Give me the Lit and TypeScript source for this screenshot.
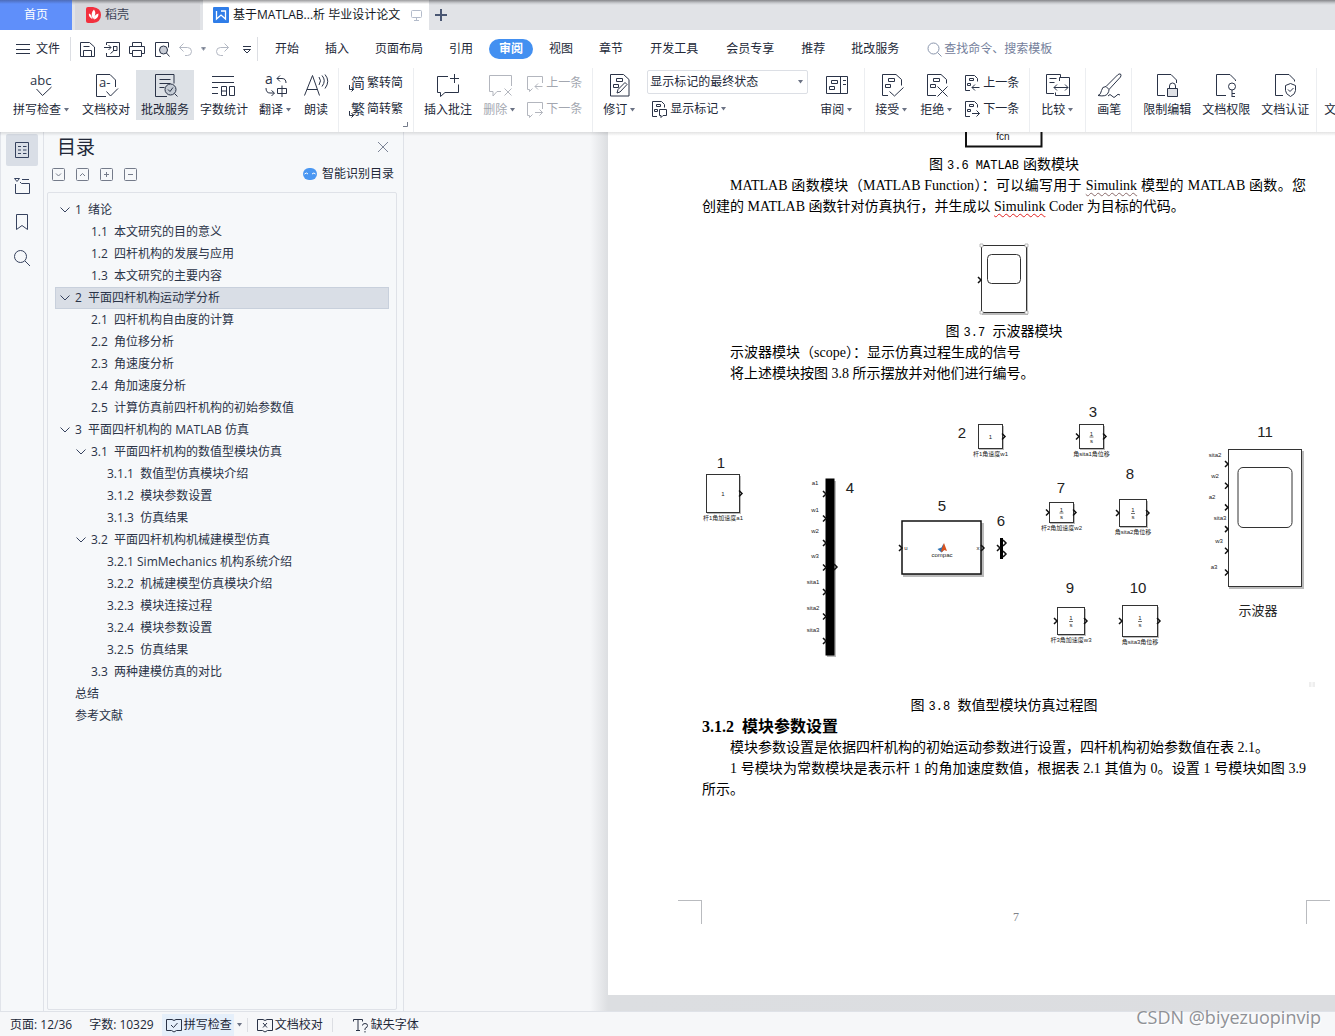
import { LitElement, html, svg, css, nothing } from "lit";
import { customElement } from "lit/decorators.js";
import { classMap } from "lit/directives/class-map.js";

const SANS = css`"Open Sans", "Noto Sans CJK SC", sans-serif`;

/* ---------- icons ---------- */

const caret = html`<svg class="caret" width="5" height="4" viewBox="0 0 5 4"><path d="M0 0h5L2.5 3.5z" fill="#6b7284"/></svg>`;

const big: Record<string, unknown> = {
  spell: svg`<text x="2" y="13" font-size="13">abc</text><path d="M8.5 17l6 6.500 9-8.500"/>`,
  proof: svg`<path d="M14 24.500H4.500v-22H18l5.500 5.500v7"/><text x="7" y="15" font-size="13">a-</text><path d="M14.500 19.500l4 4.500 7.500-7.500"/>`,
  review: svg`<path d="M16 24.500H4.500v-22h18.500v9M8.500 7.500h11M8.500 11.500h11M8.500 15.500h5"/><circle cx="19.500" cy="17.500" r="5.500" fill="#c4cbd4"/><path d="M23.500 21.500l3 3M17 17.500l2 2 3-4"/>`,
  count: svg`<path d="M2 4.500h22M2 10.500h22M2 15.500h6M2 21.500h6M11.500 14.500h5v9h-5zM11.500 19h5M19.500 14.500h5v9h-5z"/>`,
  translate: svg`<text x="3" y="12" font-size="14">a</text><path d="M18 3.500l-3 3 3 3M15 6.500h5q4 0 4 4.500M4 16q0 5 4 5h4M9.500 18.500l3 2.500-3 3M15.500 16.500h9v5h-9zM20 13.500v11.500"/>`,
  read: svg`<path d="M2.500 23.500L10.500 3.500l7 20M5 17.500h10.500M17 5q3 3.500 0 8M20 3.500q4.500 5 0 11M23 2.500q5.500 6.500 0 14"/>`,
  comment: svg`<path d="M14 4.500H3.500v16h3v4l4.500-4h13.500v-8M20.500 2v9M16 6.500h9"/>`,
  remove: svg`<path d="M25.500 14V3.500h-22v16h3.500v4.500l4-4.500h4M18.500 16.500l7 7M25.500 16.500l-7 7"/>`,
  revise: svg`<path d="M4.500 2.500h13l5.500 5v16.500H4.500zM10.500 6.500h6v3h-6zM7.500 12.500h5v3h-5zM11 21l1-3.500 7-7 2 2-7 7.500z"/>`,
  pane: svg`<path d="M3.500 4.500h21v17h-21zM17.500 4.500v17M8.500 8.500h6v3h-6zM6.500 14.500h5v3h-5zM20 8.500h3M20 12.500h3"/>`,
  accept: svg`<path d="M10 23.500H4.500v-21H18l5.500 5v6M10.500 6.500h6v3h-6zM7.500 12.500h5v3h-5zM11.500 19.500l5 4.500 9-8.500"/>`,
  reject: svg`<path d="M13 23.500H4.500v-21H18l5.500 5v4M10.500 6.500h6v3h-6zM7.500 12.500h5v3h-5zM14.500 14.500l10 10M24.500 14.500l-10 10"/>`,
  compare: svg`<path d="M10 21.500H2.500v-19h14v3M5.500 6.500h7M5.500 10.500h5M15.500 9V5.500h10v18h-14v-3M10 15.500h14M13 12.500l-3 3 3 3M21 12.500l3 3-3 3"/>`,
  pen: svg`<path d="M25.500 2q-1.500-.500-3 1L11 14.500l3 3L25.500 5q1-2 0-3zM11 14.500q-4 0-4.500 4T3 23.500q8.500 1.500 10-2.500 1-1.500 1-3.500M13 24q2-3 4 0t4 0 4-1"/>`,
  lock: svg`<path d="M12 23.500H4.500v-21H18l5.500 5.500v3"/><path d="M14.500 16.500h10v8h-10z" fill="#dfe1e6"/><path d="M16.500 16.500v-2.500q0-3 3-3t3 3v2.500"/>`,
  key: svg`<path d="M14 23.500H4.500v-21H18l5.500 5.500v1"/><circle cx="20" cy="14.500" r="3.500"/><path d="M20 18v7M20 21.500h3M20 24.500h3"/>`,
  shield: svg`<path d="M12 23.500H4.500v-21H18l5.500 5.500v1.500M19.500 11.500l5 2v5q0 3.500-5 6-5-2.500-5-6v-5zM17 17.500l2 2 3.500-3.500"/>`,
};

const small: Record<string, unknown> = {
  toSimple: svg`<text x="3" y="13" font-size="14">简</text><path d="M1.500 10v4.500h4M3.500 12l2 2.500-2 2"/>`,
  toTrad: svg`<text x="3" y="13" font-size="14">繁</text><path d="M1.500 10v4.500h4M3.500 12l2 2.500-2 2"/>`,
  prevNote: svg`<path d="M15.500 8V1.500H.5v13h2v2l3-3M15.500 11.500H8M11 8.500l-3 3 3 3"/>`,
  nextNote: svg`<path d="M15.500 8V1.500H.5v13h2v2l3-3M8 11.500h7.500M12.500 8.500l3 3-3 3"/>`,
  marks: svg`<path d="M6 15.500H1.500V.500h9l3 3v3M5.500 3.500h4v2h-4zM3.500 8.500h3v2h-3zM8.500 8.500h7v6H12l-2 2v-2H8.500z"/>`,
  prevRev: svg`<path d="M6 15.500H1.500V.500h9l3 3v3M5.500 3.500h4v2h-4zM3.500 8.500h3v2h-3zM15.500 12.500H8M11 9.500l-3 3 3 3"/>`,
  nextRev: svg`<path d="M6 15.500H1.500V.500h9l3 3v3M5.500 3.500h4v2h-4zM3.500 8.500h3v2h-3zM8 12.500h7.500M12.500 9.500l3 3-3 3"/>`,
};

const quick: [string, unknown][] = [
  ["保存", svg`<path d="M1.500 15.500v-14H10.500l5 4.500v9.500zM4.500 15v-5.500h8V15M4.500 5.500h6"/>`],
  ["输出为PDF", svg`<path d="M2.500 4V1.500h13v14h-13V12M0 6.500h7M4.500 4l2.500 2.500L4.500 9M9.500 5.500h3.500v4H9.500zM9.500 5v5l-3 2.500"/>`],
  ["打印", svg`<path d="M3.500 5V1.500h9V5M3.500 12.500h-3v-7h15v7h-3M3.500 9.500h9v6h-9z"/>`],
  ["打印预览", svg`<path d="M7 15.500H1.500v-14h13v5"/><circle cx="9.500" cy="9" r="4" fill="#c9cdd6"/><path d="M12.500 12l3 3.500"/>`],
];

const rail: [string, unknown][] = [
  ["目录", svg`<path d="M2.500 1.500h13v15h-13zM5 5.500h3M10 5.500h3.500M5 9h3M10 9h3.500M5 12.500h3M10 12.500h3.500"/>`],
  ["章节", svg`<path d="M1.500 1.500h5L4 4.500zM9 2.500h7M2.500 7v9.500h14v-10H8.500L7 5"/>`],
  ["书签", svg`<path d="M3.500 1.500h11v15L9 12.500l-5.500 4z"/>`],
  ["查找", svg`<circle cx="7.500" cy="7.500" r="6"/><path d="M12 12l5 5"/>`],
];

/* ---------- data ---------- */

type Cmd = { icon: string; label: string; drop?: boolean; on?: boolean; off?: boolean };
type Pair = { pair: Cmd[]; corner?: boolean };
type Group = (Cmd | Pair | "display")[];

const groups: Group[] = [
  [
    { icon: "spell", label: "拼写检查", drop: true },
    { icon: "proof", label: "文档校对" },
    { icon: "review", label: "批改服务", on: true },
    { icon: "count", label: "字数统计" },
    { icon: "translate", label: "翻译", drop: true },
    { icon: "read", label: "朗读" },
  ],
  [{ pair: [{ icon: "toSimple", label: "繁转简" }, { icon: "toTrad", label: "简转繁" }], corner: true }],
  [
    { icon: "comment", label: "插入批注" },
    { icon: "remove", label: "删除", drop: true, off: true },
    { pair: [{ icon: "prevNote", label: "上一条", off: true }, { icon: "nextNote", label: "下一条", off: true }] },
  ],
  [{ icon: "revise", label: "修订", drop: true }, "display", { icon: "pane", label: "审阅", drop: true }],
  [
    { icon: "accept", label: "接受", drop: true },
    { icon: "reject", label: "拒绝", drop: true },
    { pair: [{ icon: "prevRev", label: "上一条" }, { icon: "nextRev", label: "下一条" }] },
  ],
  [{ icon: "compare", label: "比较", drop: true }],
  [{ icon: "pen", label: "画笔" }],
  [
    { icon: "lock", label: "限制编辑" },
    { icon: "key", label: "文档权限" },
    { icon: "shield", label: "文档认证" },
  ],
  [{ icon: "lock", label: "文档加密" }],
];

const menus = ["开始", "插入", "页面布局", "引用", "审阅", "视图", "章节", "开发工具", "会员专享", "推荐", "批改服务"];

type Node = { n: string; t: string; lv: number; open?: boolean; sel?: boolean };
const outline: Node[] = [
  { n: "1", t: "绪论", lv: 1, open: true },
  { n: "1.1", t: "本文研究的目的意义", lv: 2 },
  { n: "1.2", t: "四杆机构的发展与应用", lv: 2 },
  { n: "1.3", t: "本文研究的主要内容", lv: 2 },
  { n: "2", t: "平面四杆机构运动学分析", lv: 1, open: true, sel: true },
  { n: "2.1", t: "四杆机构自由度的计算", lv: 2 },
  { n: "2.2", t: "角位移分析", lv: 2 },
  { n: "2.3", t: "角速度分析", lv: 2 },
  { n: "2.4", t: "角加速度分析", lv: 2 },
  { n: "2.5", t: "计算仿真前四杆机构的初始参数值", lv: 2 },
  { n: "3", t: "平面四杆机构的 MATLAB 仿真", lv: 1, open: true },
  { n: "3.1", t: "平面四杆机构的数值型模块仿真", lv: 2, open: true },
  { n: "3.1.1", t: "数值型仿真模块介绍", lv: 3 },
  { n: "3.1.2", t: "模块参数设置", lv: 3 },
  { n: "3.1.3", t: "仿真结果", lv: 3 },
  { n: "3.2", t: "平面四杆机构机械建模型仿真", lv: 2, open: true },
  { n: "3.2.1", t: "SimMechanics 机构系统介绍", lv: 3 },
  { n: "3.2.2", t: "机械建模型仿真模块介绍", lv: 3 },
  { n: "3.2.3", t: "模块连接过程", lv: 3 },
  { n: "3.2.4", t: "模块参数设置", lv: 3 },
  { n: "3.2.5", t: "仿真结果", lv: 3 },
  { n: "3.3", t: "两种建模仿真的对比", lv: 2 },
  { n: "", t: "总结", lv: 1 },
  { n: "", t: "参考文献", lv: 1 },
];

/* ---------- top area ---------- */

@customElement("title-tabs")
class TitleTabs extends LitElement {
  static styles = css`
    :host { display: block; }
    .bar { display: flex; height: 30px; background: linear-gradient(#85868a, #c9cbcf 3px, #e1e3e7 5px); font: 12px/30px ${SANS}; color: #3c4356; }
    button { display: flex; align-items: center; border: 0; padding: 0; background: none; font: inherit; color: inherit; white-space: nowrap; }
    .home { width: 72px; justify-content: center; background: linear-gradient(#4d6cb8, #5f8ffa 4px); color: #fff; margin-right: 3px; }
    .shop { width: 125px; padding-left: 11px; gap: 4px; background: linear-gradient(#85868a, #d7d8dc 4px); margin-right: 3px; }
    .doc { width: 226px; padding-left: 10px; gap: 4px; background: linear-gradient(#9c9c9e, #fff 4px); color: #131722; }
    .doc .screen { margin-left: 7px; }
    .add { padding: 0 6px; }
  `;
  render() {
    return html`<div class="bar" role="tablist">
      <button class="home" role="tab">首页</button>
      <button class="shop" role="tab"><svg width="15" height="16" viewBox="0 0 15 16"><path d="M0 2q0-2 2-2h5q8 1 8 8t-8 8H2q-2 0-2-2z" fill="#f2303e"/><path d="M6 12Q2 9 3 6.500q3 1 3 5.500M7 12.500Q4 6 8 2.500q3 4-1 10M8 12.500q0-5 4.500-6 0 5-4.500 6" fill="#fff"/></svg>稻壳</button>
      <button class="doc" role="tab" aria-selected="true"><svg width="16" height="16" viewBox="0 0 16 16"><rect width="16" height="16" rx="1" fill="#2f7de8"/><path d="M3.500 4v8L8 8l4.500 4V4H8" fill="none" stroke="#fff" stroke-width="1.300"/></svg>基于MATLAB...析 毕业设计论文<svg class="screen" width="12" height="12" viewBox="0 0 12 12" fill="none" stroke="#b4bccb"><rect x=".5" y="1.500" width="10" height="7" rx="1"/><path d="M5.500 8.500v3M3 11.500h5"/></svg></button>
      <button class="add" aria-label="新建"><svg width="12" height="12" viewBox="0 0 12 12" stroke="#4a5773" stroke-width="2"><path d="M6 0v12M0 6h12"/></svg></button>
    </div>`;
  }
}

@customElement("menu-row")
class MenuRow extends LitElement {
  static styles = css`
    :host { display: block; }
    .row { display: flex; align-items: center; height: 38px; padding-left: 16px; background: #fff; font: 12px/20px ${SANS}; color: #222838; }
    button { display: flex; align-items: center; border: 0; background: none; padding: 0; font: inherit; color: inherit; white-space: nowrap; }
    svg { flex: none; fill: none; stroke: #2a3347; }
    .file { gap: 6px; }
    .sep { width: 1px; height: 24px; background: #dcdee3; }
    .quick { display: flex; align-items: center; gap: 9px; padding: 0 1px 0 8px; margin-left: 10px; margin-right: 4px; border: solid #dcdee3; border-width: 0 1px; height: 24px; }
    .quick .faint svg { stroke: #b3b8c3; }
    .quick .caret { fill: #6b7284; stroke: none; }
    .history { gap: 8px; }
    .tabs { display: flex; }
    .tabs button { padding: 0 13px; }
    .tabs .on { padding: 0 10px; margin: 0 3px; background: #4390f1; color: #fff; border-radius: 10px; font-weight: 700; }
    .tabs .wide { padding: 0 14px; }
    label { display: flex; align-items: center; gap: 2px; margin-left: 15px; flex: 1; }
    label svg { stroke: #8a96ad; }
    input { border: 0; outline: 0; padding: 0; width: 100%; font: inherit; background: none; }
    input::placeholder { color: #74809b; opacity: 1; }
  `;
  render() {
    return html`<div class="row">
      <button class="file"><svg width="14" height="12" viewBox="0 0 14 12"><path d="M0 1.500h14M0 6.500h14M0 10.500h14"/></svg>文件</button>
      <div class="quick">
        ${quick.map(([name, art]) => html`<button aria-label=${name}><svg width="16" height="17" viewBox="0 0 16 17">${art}</svg></button>`)}
        <button class="faint history" aria-label="撤销"><svg width="14" height="13" viewBox="0 0 14 13"><path d="M4.500.500l-4 4 4 4M.500 4.500h8q4 0 4 4t-4 4H6"/></svg>${caret}</button>
        <button class="faint" aria-label="恢复"><svg width="14" height="13" viewBox="0 0 14 13"><path d="M9.500.500l4 4-4 4M13.500 4.500h-8q-4 0-4 4t4 4H8"/></svg></button>
        <button aria-label="自定义快速访问工具栏"><svg width="18" height="9" viewBox="0 0 18 9"><path d="M5 1.500h8M5.500 4.500L9 8l3.500-3.500z"/></svg></button>
      </div>
      <nav class="tabs">
        ${menus.map((m) => html`<button class=${classMap({ on: m === "审阅", wide: m === "开发工具" || m === "会员专享" })}>${m}</button>`)}
      </nav>
      <label><svg width="15" height="15" viewBox="0 0 15 15"><circle cx="6.500" cy="6.500" r="5.500"/><path d="M10.500 10.500l4 4"/></svg><input type="search" aria-label="查找命令" placeholder="查找命令、搜索模板" /></label>
    </div>`;
  }
}

@customElement("ribbon-bar")
class RibbonBar extends LitElement {
  static styles = css`
    :host { display: block; position: relative; z-index: 2; }
    .bar { display: flex; height: 64px; padding-left: 8px; overflow: hidden; background: #fff; font: 12px/16px ${SANS}; color: #222838; }
    .shade { height: 4px; margin-bottom: -4px; background: linear-gradient(#0000001c, #0000); }
    .group { display: flex; flex: none; gap: 1px; padding-right: 5px; }
    .group + .group { padding-left: 5px; border-left: 1px solid #eceef1; }
    .group:nth-child(n + 6) { padding-left: 6px; }
    .group:nth-child(8) { padding-right: 2px; }
    .group:last-child { padding-left: 2px; }
    button { border: 0; background: none; padding: 0; font: inherit; color: inherit; white-space: nowrap; }
    svg { flex: none; fill: none; stroke: #2a3347; overflow: visible; }
    svg text { fill: #2a3347; stroke: none; font-family: "Open Sans", "Noto Sans CJK SC", sans-serif; }
    .caret { fill: #6b7284; stroke: none; margin: 0 2px 0 3px; }
    .tall { display: flex; flex-direction: column; align-items: center; gap: 4px; height: 50px; margin-top: 2px; padding: 2px 5px; }
    .tall > svg { margin: 0 -2px; }
    .tall span, .line { display: flex; align-items: center; }
    .on { background: #dde1e6; }
    .off { color: #a3a7b0; }
    .off svg { stroke: #b3b6be; }
    .off .caret { fill: #a3a7b0; stroke: none; }
    .pair { position: relative; display: flex; flex-direction: column; gap: 8px; padding: 6px 5px 0 4px; }
    .line { gap: 2px; height: 18px; }
    .corner { position: absolute; right: -1px; bottom: 4px; stroke: #747b8a; }
    .display { display: flex; flex-direction: column; gap: 6px; margin: 2px 6px 0 4px; }
    .pick { position: relative; display: flex; align-items: center; }
    .pick .caret { position: absolute; right: 3px; pointer-events: none; }
    select { appearance: none; width: 161px; height: 24px; padding: 0 2px; border: 1px solid #dcdfe5; border-radius: 2px; background: #fff; font: inherit; color: inherit; }
    .display .line { margin-left: 4px; }
    .display .line .caret { margin-left: 1px; }
  `;
  private tall(c: Cmd) {
    return html`<button class=${classMap({ tall: true, on: !!c.on, off: !!c.off })} ?disabled=${c.off}>
      <svg width="28" height="26" viewBox="0 0 28 26">${big[c.icon]}</svg><span>${c.label}${c.drop ? caret : nothing}</span>
    </button>`;
  }
  private line(c: Cmd) {
    return html`<button class=${classMap({ line: true, off: !!c.off })} ?disabled=${c.off}>
      <svg width="17" height="17" viewBox="0 0 17 17">${small[c.icon]}</svg>${c.label}${c.drop ? caret : nothing}
    </button>`;
  }
  private item(it: Cmd | Pair | "display") {
    if (it === "display")
      return html`<div class="display">
        <div class="pick"><select aria-label="标记显示方式"><option>显示标记的最终状态</option></select>${caret}</div>
        ${this.line({ icon: "marks", label: "显示标记", drop: true })}
      </div>`;
    if ("pair" in it)
      return html`<div class="pair">${it.pair.map((c) => this.line(c))}
        ${it.corner ? html`<svg class="corner" width="6" height="6" viewBox="0 0 6 6"><path d="M4.500 0v4.500H0"/></svg>` : nothing}</div>`;
    return this.tall(it);
  }
  render() {
    return html`<div class="bar">${groups.map((g) => html`<div class="group">${g.map((i) => this.item(i))}</div>`)}</div><div class="shade"></div>`;
  }
}

/* ---------- outline ---------- */

@customElement("outline-pane")
class OutlinePane extends LitElement {
  static styles = css`
    :host { display: flex; flex: none; background: #f6f8fa; color: #2a3347; font: 12px/22px ${SANS}; border-left: 1px solid #e1e4ea; }
    button { border: 0; background: none; padding: 0; display: flex; align-items: center; justify-content: center; font: inherit; color: inherit; }
    svg { fill: none; stroke: #36425e; flex: none; }
    .rail { display: flex; flex-direction: column; gap: 4px; padding: 2px 5px; border-right: 1px solid #dfe2e8; }
    .rail button { width: 32px; height: 32px; border-radius: 2px; }
    .rail .on { background: #d9dee6; }
    .pane { display: flex; flex-direction: column; width: 360px; border-right: 1px solid #dfe2e8; box-sizing: border-box; }
    .head { display: flex; justify-content: space-between; align-items: center; height: 30px; padding: 0 14px 0 13px; }
    h2 { margin: 0; font-size: 19px; line-height: 28px; font-weight: 400; color: #222838; }
    .head svg { stroke: #7c8496; }
    .tools { display: flex; align-items: center; gap: 11px; height: 24px; padding: 0 9px 0 8px; }
    .tools svg { stroke: #747b8a; }
    .smart { margin-left: auto; gap: 5px; color: #222838; }
    .smart svg { stroke: #fff; }
    .tree { flex: 1; list-style: none; margin: 6px 6px 1px 3px; padding: 6px 7px; border: 1px solid #dfe2e8; border-radius: 2px; }
    .node { display: flex; align-items: center; height: 22px; border: 1px solid transparent; box-sizing: border-box; white-space: pre; }
    .node svg { width: 10px; margin: 0 5px 0 4px; }
    .sel { background: #d9dee6; border-color: #c8d0dc; }
    .lv2 { padding-left: 16px; }
    .lv3 { padding-left: 32px; }
  `;
  render() {
    return html`
      <nav class="rail">${rail.map(([name, art], i) => html`<button aria-label=${name} class=${i ? "" : "on"}><svg width="18" height="18" viewBox="0 0 18 18">${art}</svg></button>`)}</nav>
      <section class="pane">
        <div class="head"><h2>目录</h2><button aria-label="关闭"><svg width="12" height="12" viewBox="0 0 12 12"><path d="M1 1l10 10M11 1L1 11"/></svg></button></div>
        <div class="tools">
          ${[["展开", "M4 5.500l2.500 2.500L9 5.500"], ["收起", "M4 8l2.500-2.500L9 8"], ["增加层级", "M6.500 4v5M4 6.500h5"], ["减少层级", "M4 6.500h5"]].map(
            ([n, d]) => html`<button aria-label=${n}><svg width="13" height="13" viewBox="0 0 13 13"><rect x=".5" y=".5" width="12" height="12" rx="1"/><path d=${d}/></svg></button>`
          )}
          <button class="smart"><svg width="14" height="12" viewBox="0 0 14 12"><rect width="14" height="12" rx="6" fill="#4a97f2" stroke="none"/><path d="M1.500 6q2-2 3.500 0M9 6q2-2 3.500 0"/></svg>智能识别目录</button>
        </div>
        <ul class="tree">
          ${outline.map((o) => html`<li class="node lv${o.lv} ${o.sel ? "sel" : ""}"><svg width="10" height="6" viewBox="0 0 10 6">${o.open ? svg`<path d="M.5.500L5 5 9.500.500"/>` : nothing}</svg>${o.n ? o.n + (o.n === "3.2.1" ? " " : "  ") : ""}${o.t}</li>`)}
        </ul>
      </section>`;
  }
}

/* ---------- document ---------- */

type Block = { id: string; nx: number; ny: number; x: number; y: number; w: number; h: number; name: string; int?: boolean };
const blocks: Block[] = [
  { id: "1", nx: 721, ny: 468, x: 706, y: 474, w: 34, h: 39, name: "杆1角加速度a1" },
  { id: "2", nx: 962, ny: 438, x: 978, y: 424, w: 25, h: 25, name: "杆1角速度w1" },
  { id: "3", nx: 1093, ny: 417, x: 1079, y: 424, w: 25, h: 25, name: "角sita1角位移", int: true },
  { id: "7", nx: 1061, ny: 493, x: 1049, y: 502, w: 25, h: 21, name: "杆2角加速度w2", int: true },
  { id: "8", nx: 1130, ny: 479, x: 1119, y: 499, w: 28, h: 28, name: "角sita2角位移", int: true },
  { id: "9", nx: 1070, ny: 593, x: 1057, y: 607, w: 28, h: 28, name: "杆3角加速度w3", int: true },
  { id: "10", nx: 1138, ny: 593, x: 1122, y: 605, w: 36, h: 32, name: "角sita3角位移", int: true },
];
const port = (x: number, y: number) => svg`<path class="port" d="M${x - 2} ${y - 3}l3 3-3 3"/>`;

@customElement("doc-page")
class DocPage extends LitElement {
  static styles = css`
    :host { display: flex; flex: 1; min-width: 0; overflow: hidden; background: linear-gradient(90deg, #f6f7f9, #f6f7f9 186px, #dcdee1 204px, #dcdde0); }
    .page { display: flex; flex-direction: column; flex: none; box-sizing: border-box; width: 792px; margin: 0 0 16px 204px; padding: 0 94px; background: #fff; color: #000; font: 14px/21px "Liberation Serif", "Noto Sans CJK SC", serif; }
    p, h3, figure { margin: 0; }
    p { text-indent: 28px; text-align: justify; }
    h3 { font-size: 16px; line-height: 21px; white-space: pre; }
    figcaption { text-align: center; height: 21px; }
    figcaption span { font: 12px/21px "Liberation Mono", monospace; margin: 0 4px; white-space: pre; }
    figcaption .tight { margin-right: 0; }
    figure svg { display: block; margin: 0 auto; overflow: visible; fill: #fff; stroke: #333; }
    figure text { font-family: "Liberation Sans", "Noto Sans CJK SC", sans-serif; fill: #222; stroke: none; text-anchor: middle; }
    .port { fill: none; stroke: #111; stroke-width: 1.500px; }
    .num { font-size: 15px; }
    .tiny { font-size: 6px; }
    .song { font-size: 13px; }
    .cast { fill: #bbb; stroke: none; }
    .typo { text-decoration: underline wavy #e02020 1px; text-underline-offset: 2px; text-decoration-skip-ink: none; }
    .plain { text-decoration-color: #8a6a6a; }
    footer { display: flex; justify-content: space-between; margin: auto -24px 71px; height: 24px; color: #808389; font-size: 12px; line-height: 34px; }
    footer i { width: 24px; box-sizing: border-box; border-top: 1px solid #b9bbbf; }
    .l { border-right: 1px solid #b9bbbf; }
    .r { border-left: 1px solid #b9bbbf; }
    footer span { padding-left: 24px; }
  `;
  private block(b: Block) {
    const cx = b.x + b.w / 2;
    const cy = b.y + b.h / 2;
    return svg`<text class="num" x=${b.nx} y=${b.ny}>${b.id}</text>
      <rect class="cast" x=${b.x + 1} y=${b.y + 2} width=${b.w} height=${b.h - 1}/>
      <rect x=${b.x + 0.5} y=${b.y + 0.5} width=${b.w - 1} height=${b.h - 1}/>
      ${b.int
        ? svg`<text class="tiny" x=${cx} y=${cy - 1}>1</text><path d="M${cx - 2} ${cy + 0.5}h4" stroke-width=".7"/><text class="tiny" x=${cx} y=${cy + 6}>s</text>${port(b.x - 1, cy)}`
        : svg`<text class="tiny" x=${cx} y=${cy + 2}>1</text>`}
      ${port(b.x + b.w + 1, cy)}
      <text class="tiny" x=${cx} y=${b.y + b.h + 7}>${b.name}</text>`;
  }
  render() {
    const muxIn = ["a1", "w1", "w2", "w3", "sita1", "sita2", "sita3"];
    const muxY = [485, 512, 533, 558, 584, 610, 632];
    const scopeIn: [string, number, number][] = [["sita2", 1215, 457], ["w2", 1215, 478], ["a2", 1212, 499], ["sita3", 1220, 520], ["w3", 1219, 543], ["a3", 1214, 569]];
    return html`<article class="page">
      <figure>
        <svg width="78" height="22" viewBox="0 0 78 22"><path d="M1 0v14.500h75.500V0" stroke="#111" stroke-width="2"/><text x="38" y="8" font-size="10">fcn</text></svg>
        <figcaption>图<span>3.6 MATLAB</span>函数模块</figcaption>
      </figure>
      <p>MATLAB 函数模块（MATLAB Function）：可以编写用于 <span class="typo plain">Simulink</span> 模型的 MATLAB 函数。您创建的 MATLAB 函数针对仿真执行，并生成以 <span class="typo">Simulink</span> Coder 为目标的代码。</p>
      <figure>
        <svg width="56" height="104" viewBox="0 1 56 104"><rect class="cast" x="6" y="31" width="46" height="68"/><rect x="5.500" y="29.500" width="45" height="67" rx="1"/><rect x="11.500" y="38.500" width="33" height="29" rx="4"/>${port(4, 64)}<path d="M4 28h3v3H4zM49 28h3v3h-3zM4 95h3v3H4zM49 95h3v3h-3z" stroke="#aaa" stroke-width=".8"/></svg>
        <figcaption>图<span class="tight">3.7 </span>示波器模块</figcaption>
      </figure>
      <p>示波器模块（scope）：显示仿真过程生成的信号</p>
      <p>将上述模块按图 3.8 所示摆放并对他们进行编号。</p>
      <figure>
        <svg width="604" height="311" viewBox="702 384 604 311">
          ${blocks.map((b) => this.block(b))}
          <rect class="cast" x="827" y="481" width="9" height="176"/><rect x="826" y="479" width="8" height="176" fill="#000" stroke="#000"/>
          ${muxIn.map((t, i) => svg`<text class="tiny" x=${i > 3 ? 813 : 815} y=${muxY[i]}>${t}</text>${port(825, 494 + i * 24.5)}`)}
          ${port(836, 567)}
          <text class="num" x="850" y="493">4</text>
          <text class="num" x="942" y="511">5</text>
          <rect class="cast" x="903" y="523" width="81" height="54"/><rect x="902" y="521" width="79" height="53" stroke="#111" stroke-width="1.500"/>
          ${port(901, 548)}${port(983, 548)}
          <path d="M937.500 549l4-1.500 2-4 1 6-3 3z" fill="#2e74b5" stroke="none"/><path d="M941 551l3-8 3 8-3-1-2 2z" fill="#d9531e" stroke="none"/>
          <text class="tiny" x="942" y="557">compac</text><text class="tiny" x="906" y="550">u</text><text class="tiny" x="978" y="550">x</text>
          <text class="num" x="1001" y="526">6</text>
          <rect x="1000.500" y="538.500" width="2" height="20" fill="#000" stroke="#000"/>${port(999, 548)}${port(1005, 543)}${port(1005, 554)}
          <text class="num" x="1265" y="437">11</text>
          <rect class="cast" x="1229" y="451" width="75" height="138"/><rect x="1228.500" y="449.500" width="73" height="137"/>
          <rect x="1238" y="467.500" width="54" height="60" rx="5"/>
          ${scopeIn.map(([t, x, y], i) => svg`<text class="tiny" x=${x} y=${y}>${t}</text>${port(1227, 464 + i * 21.7)}`)}
          <text class="song" x="1258" y="615">示波器</text>
          <path d="M1309 682h2.500v5h-2.500zM1312.500 682h2.500v5h-2.500z" fill="#eee" stroke="none"/>
        </svg>
        <figcaption>图<span class="tight">3.8 </span>数值型模块仿真过程图</figcaption>
      </figure>
      <h3>3.1.2  模块参数设置</h3>
      <p>模块参数设置是依据四杆机构的初始运动参数进行设置，四杆机构初始参数值在表 2.1。</p>
      <p>1 号模块为常数模块是表示杆 1 的角加速度数值，根据表 2.1 其值为 0。设置 1 号模块如图 3.9 所示。</p>
      <footer><i class="l"></i><span>7</span><i class="r"></i></footer>
    </article>`;
  }
}

@customElement("status-bar")
class StatusBar extends LitElement {
  static styles = css`
    :host { display: block; position: relative; background: #f6f7f9; border-top: 1px solid #dfe2e8; }
    .bar { display: flex; align-items: center; box-sizing: border-box; height: 24px; padding: 2px 0 0 10px; font: 12px/22px ${SANS}; color: #222838; white-space: nowrap; }
    span { margin-right: 17px; }
    .words { margin-right: 8px; }
    button { display: flex; align-items: center; gap: 2px; height: 22px; border: 0; background: none; padding: 0 2px 0 4px; font: inherit; color: inherit; }
    .on { background: #e5effa; }
    svg { fill: none; stroke: #2a3347; }
    .caret { fill: #6b7284; stroke: none; margin: 0 5px 0 3px; }
    .sep { width: 1px; height: 14px; background: #dcdee3; }
    .part { margin: 0 7px 0 5px; }
    .font { margin-left: 16px; }
    .mark { position: absolute; right: 14px; top: -7px; font: 18px/24px ${SANS}; color: #8f9196; text-shadow: 1px 1px #fff; }
  `;
  private book = (d: string) => html`<svg width="16" height="15" viewBox="0 0 16 15"><path d="M6 1.500H.5v11h5l2.500 1.500 2.500-1.500h5v-11H10L8 2.500z"/><path d=${d}/></svg>`;
  render() {
    return html`<div class="bar">
      <span>页面: 12/36</span><span class="words">字数: 10329</span>
      <button class="on">${this.book("M5 7l2.500 2.500L11.500 5")}拼写检查</button>${caret}
      <i class="sep"></i><button class="part">${this.book("M6 5l4 4.500M10 5L6 9.500")}文档校对</button>
      <i class="sep"></i><button class="font"><svg width="16" height="15" viewBox="0 0 16 15"><path d="M.5 3.500v-2h9v2M5 1.500v11M3 12.500h4M9.500 7.500q0-2 2.500-2t2.500 2-2.500 3v1.500M12 13v1.500"/></svg>缺失字体</button>
    </div><div class="mark">CSDN @biyezuopinvip</div>`;
  }
}

@customElement("app-root")
class AppRoot extends LitElement {
  static styles = css`
    :host { display: flex; flex-direction: column; min-height: 100vh; overflow: hidden; background: #f6f7f9; }
    .work { display: flex; flex: 1; }
  `;
  render() {
    return html`<title-tabs></title-tabs><menu-row></menu-row><ribbon-bar></ribbon-bar>
      <div class="work"><outline-pane></outline-pane><doc-page></doc-page></div>
      <status-bar></status-bar>`;
  }
}
